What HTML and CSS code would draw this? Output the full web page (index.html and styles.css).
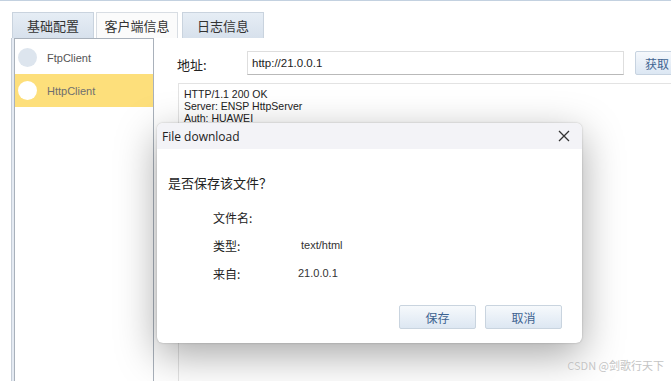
FILE: index.html
```html
<!DOCTYPE html>
<html lang="zh-CN">
<head>
    <meta charset="UTF-8">
    <meta name="viewport" content="width=device-width, initial-scale=1.0">
    <title>HttpClient</title>
    <link rel="stylesheet" href="styles.css">
</head>
<body>
    <div class="window">
        <div class="tabs">
            <div class="tab">基础配置</div>
            <div class="tab active">客户端信息</div>
            <div class="tab">日志信息</div>
        </div>
        <div class="main">
            <div class="frame">
                <ul class="clients">
                    <li class="client"><span class="dot"></span>FtpClient</li>
                    <li class="client selected"><span class="dot"></span>HttpClient</li>
                </ul>
            </div>
            <div class="content">
                <div class="address-row">
                    <label class="address-label">地址:</label>
                    <div class="address-input">http://21.0.0.1</div>
                    <button class="fetch-btn">获取</button>
                </div>
                <div class="response">
                    <div>HTTP/1.1 200 OK</div>
                    <div>Server: ENSP HttpServer</div>
                    <div>Auth: HUAWEI</div>
                </div>
            </div>
        </div>
    </div>

    <div class="dialog">
        <div class="dialog-title">
            <span>File download</span>
            <svg class="close" width="12" height="12" viewBox="0 0 12 12">
                <path d="M1 1 L11 11 M11 1 L1 11" stroke="#333" stroke-width="1.3" fill="none"/>
            </svg>
        </div>
        <div class="dialog-body">
            <p class="question">是否保存该文件？</p>
            <div class="info">
                <span class="info-key">文件名:</span><span class="info-val"></span>
                <span class="info-key">类型:</span><span class="info-val type">text/html</span>
                <span class="info-key">来自:</span><span class="info-val">21.0.0.1</span>
            </div>
            <div class="actions">
                <button class="dlg-btn">保存</button>
                <button class="dlg-btn">取消</button>
            </div>
        </div>
    </div>

    <div class="watermark">CSDN @剑歌行天下</div>
</body>
</html>
```

FILE: styles.css
```css
body {
    margin: 0;
    width: 671px;
    height: 381px;
    overflow: hidden;
    background: #fff;
    font-family: "Liberation Sans", "Noto Sans CJK SC", sans-serif;
    color: #222;
    position: relative;
}

.window {
    height: 380px;
    border-top: 1px solid #c3d1e0;
    display: flex;
    flex-direction: column;
}

.tabs {
    display: flex;
    padding: 11px 0 0 12px;
    height: 26px;
}

.tab {
    width: 82px;
    height: 26px;
    margin-right: 2px;
    border: 1px solid #c9d3de;
    border-bottom: none;
    background: linear-gradient(#e6edf5, #d7e1ec);
    font-family: "Noto Sans CJK SC", sans-serif;
    font-size: 13px;
    color: #333;
    display: flex;
    align-items: center;
    justify-content: center;
    box-sizing: border-box;
}

.tab.active {
    background: #fbfbfb;
    border-color: #d8dde3;
    margin-right: 4px;
}

.main {
    flex: 1;
    display: flex;
    min-height: 0;
}

.frame {
    flex: 0 0 auto;
    width: 140px;
    border-left: 1px solid #c4ccd6;
    margin-left: 11px;
    padding-left: 2px;
    background: #e4eaf2;
    display: flex;
}

.clients {
    list-style: none;
    margin: 0;
    padding: 2px 0 0;
    flex: 1;
    background: #fff;
    border: 1px solid #a9b1bb;
    border-bottom: none;
}

.client {
    height: 33px;
    display: flex;
    align-items: center;
    padding-left: 3px;
    font-size: 11px;
    color: #555;
}

.client.selected {
    background: #fddf7b;
    color: #6f6f6f;
}

.dot {
    width: 19px;
    height: 19px;
    border-radius: 50%;
    background: #dde5ee;
    margin-right: 10px;
}

.selected .dot {
    background: #fff;
}

.content {
    flex: 1;
    min-width: 0;
    overflow: hidden;
    padding: 13px 0 0 23px;
    display: flex;
    flex-direction: column;
}

.address-row {
    display: flex;
    align-items: center;
    height: 24px;
}

.address-label {
    flex: 0 0 70px;
    font-family: "Noto Sans CJK SC", sans-serif;
    font-size: 13px;
    color: #222;
    padding-top: 3px;
}

.address-input {
    flex: 0 0 377px;
    height: 24px;
    border: 1px solid #dedede;
    border-bottom-color: #b9b9b9;
    box-sizing: border-box;
    font-size: 11.5px;
    line-height: 22px;
    padding-left: 4px;
    margin-right: 11px;
}

.fetch-btn {
    flex: 0 0 50px;
    height: 24px;
    border: 1px solid #c7d3e0;
    border-radius: 2px;
    background: linear-gradient(#f5f8fc, #dce7f3);
    font-family: "Noto Sans CJK SC", sans-serif;
    font-size: 12px;
    color: #3f6491;
    text-align: left;
    padding: 0 0 0 9px;
}

.response {
    flex: 1;
    margin-top: 8px;
    margin-left: 1px;
    border: 1px solid #e3e3e3;
    border-right: none;
    border-bottom: none;
    padding: 4px 5px;
    font-size: 10.5px;
    line-height: 12px;
    color: #222;
}

.dialog {
    position: absolute;
    left: 157px;
    top: 123px;
    width: 425px;
    height: 220px;
    background: #fff;
    border-radius: 6px;
    box-shadow: 0 12px 40px rgba(0, 0, 0, 0.35), 0 0 2px rgba(0, 0, 0, 0.25);
    overflow: hidden;
    display: flex;
    flex-direction: column;
}

.dialog-title {
    height: 26px;
    background: #f3f3f7;
    display: flex;
    align-items: center;
    justify-content: space-between;
    padding: 0 12px 0 5px;
    font-family: "Open Sans", "Noto Sans", sans-serif;
    font-size: 12px;
    color: #222;
}

.dialog-body {
    flex: 1;
    padding: 0 20px 0 11px;
    font-family: "Noto Sans CJK SC", sans-serif;
    font-size: 12px;
    color: #222;
    display: flex;
    flex-direction: column;
}

.question {
    margin: 25px 0 0;
    font-size: 13px;
    line-height: 18px;
}

.info {
    display: grid;
    grid-template-columns: 85px 1fr;
    grid-auto-rows: 28px;
    align-items: center;
    margin: 11px 0 0 45px;
}

.info-val {
    font-family: "Liberation Sans", sans-serif;
    font-size: 11px;
    color: #333;
}

.info-val.type {
    padding-left: 3px;
}

.actions {
    display: flex;
    justify-content: flex-end;
    gap: 9px;
    margin-top: 18px;
}

.dlg-btn {
    width: 77px;
    height: 24px;
    border: 1px solid #c9d4df;
    border-radius: 2px;
    background: linear-gradient(#f6f9fc, #dde7f2);
    font-family: "Noto Sans CJK SC", sans-serif;
    font-size: 12px;
    color: #3d6290;
}

.watermark {
    position: absolute;
    right: 7px;
    bottom: 8px;
    font-family: "Noto Sans CJK SC", sans-serif;
    font-size: 11px;
    color: #c4c4c4;
    text-shadow: 0 0 1px #fff;
}
```
